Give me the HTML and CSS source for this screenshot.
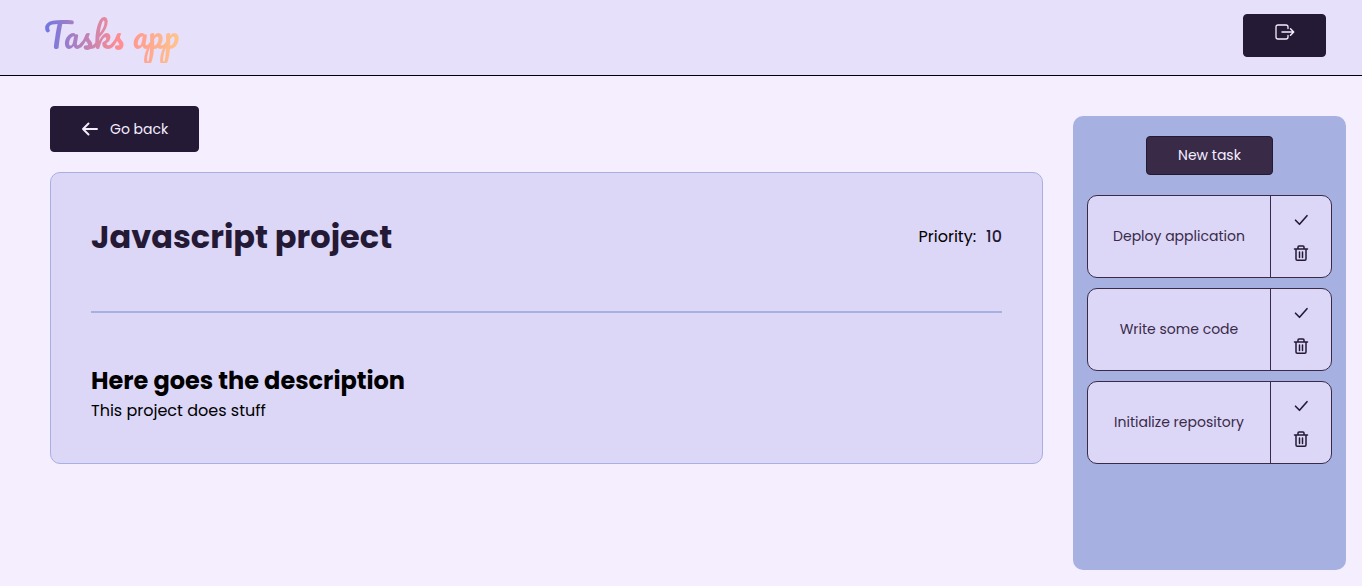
FILE: index.html
```html
<!DOCTYPE html>
<html lang="en">
<head>
<meta charset="utf-8">
<meta name="viewport" content="width=device-width, initial-scale=1">
<title>Tasks app</title>
<link rel="stylesheet" href="styles.css">
</head>
<body>
<svg class="sprite" aria-hidden="true">
  <symbol id="check" viewBox="0 0 16 16"><path d="M2.5 8.200 6.500 12.300 14 3.700" fill="none" stroke="currentColor" stroke-width="1.6" stroke-linecap="round" stroke-linejoin="round"/></symbol>
  <symbol id="trash" viewBox="0 0 16 16"><path d="M1.5 4h13M3 4v10q0 1.2 1.2 1.2h7.6Q13 15.200 13 14V4M5 3.500V2q0-1 1-1h4q1 0 1 1v1.500M6.500 7v5.500M9.500 7v5.500" fill="none" stroke="currentColor" stroke-width="1.5" stroke-linecap="round" stroke-linejoin="round"/></symbol>
</svg>
<header class="header">
  <a class="logo" href="#">Tasks app</a>
  <button class="button logout" type="button" aria-label="Log out">
    <svg class="logout-icon" viewBox="0 0 20 16" fill="none" stroke="currentColor" stroke-linecap="round" stroke-linejoin="round"><path d="M13 4.500V3q0-2-2-2H3Q1 1 1 3v10q0 2 2 2h8q2 0 2-2v-1.500" stroke-width="1.300"/><path d="M7 8h11.500M15.500 4.800 18.700 8l-3.200 3.200" stroke-width="1.500"/></svg>
  </button>
</header>
<main class="layout">
  <div class="content">
    <button class="button back" type="button">
      <svg class="back-icon" viewBox="0 0 16 16" fill="none" stroke="currentColor" stroke-width="1.900" stroke-linecap="round" stroke-linejoin="round"><path d="M15 8H1M6.500 2.500 1 8l5.500 5.500"/></svg>
      Go back
    </button>
    <article class="project">
      <div class="project-head">
        <h1 class="title">Javascript project</h1>
        <p class="priority">Priority: <span class="priority-value">10</span></p>
      </div>
      <h2 class="subtitle">Here goes the description</h2>
      <p class="description">This project does stuff</p>
    </article>
  </div>
  <aside class="tasks">
    <button class="button new-task" type="button">New task</button>
    <ul class="task-list">
      <li class="task">
        <p class="task-name">Deploy application</p>
        <div class="task-actions">
          <button class="icon-button" type="button" aria-label="Complete"><svg class="icon"><use href="#check"/></svg></button>
          <button class="icon-button" type="button" aria-label="Delete"><svg class="icon"><use href="#trash"/></svg></button>
        </div>
      </li>
      <li class="task">
        <p class="task-name">Write some code</p>
        <div class="task-actions">
          <button class="icon-button" type="button" aria-label="Complete"><svg class="icon"><use href="#check"/></svg></button>
          <button class="icon-button" type="button" aria-label="Delete"><svg class="icon"><use href="#trash"/></svg></button>
        </div>
      </li>
      <li class="task">
        <p class="task-name">Initialize repository</p>
        <div class="task-actions">
          <button class="icon-button" type="button" aria-label="Complete"><svg class="icon"><use href="#check"/></svg></button>
          <button class="icon-button" type="button" aria-label="Delete"><svg class="icon"><use href="#trash"/></svg></button>
        </div>
      </li>
    </ul>
  </aside>
</main>
</body>
</html>
```
FILE: styles.css
```css
* { box-sizing: border-box; margin: 0; padding: 0; }
body {
  display: flex;
  flex-direction: column;
  min-height: 100vh;
  background: #f4eeff;
  color: #000;
  font: 16px/24px Poppins, Inter, sans-serif;
}
.sprite { display: none; }
.header {
  display: flex;
  justify-content: space-between;
  align-items: center;
  padding: 8px 36px 12px 44px;
  background: #e6e0fa;
  border-bottom: 1px solid #000;
}
.logo {
  font: 33px/55px Pacifico, cursive;
  text-decoration: none;
  color: transparent;
  background: linear-gradient(to right, #6c76e4, #ff8c92 55%, #ffc48c);
  background-clip: text;
  -webkit-background-clip: text;
}
.button {
  display: flex;
  align-items: center;
  justify-content: center;
  border: 1px solid #251a35;
  border-radius: 4px;
  background: #251a35;
  color: #f4eeff;
  font: inherit;
  font-size: 14px;
  cursor: pointer;
}
.logout { padding: 9px 30px 16px 31px; }
.logout-icon { width: 20px; height: 16px; }
.layout {
  flex: 1;
  display: grid;
  grid-template-columns: 40fr 11fr;
  gap: 30px;
  padding: 30px 16px 16px 50px;
}
.back { gap: 12px; padding: 10px 30px 10px 31px; margin-bottom: 20px; }
.back-icon { width: 16px; height: 16px; }
.project {
  padding: 40px;
  background: #dcd6f7;
  border: 1px solid #a6b1e1;
  border-radius: 10px;
}
.project-head {
  display: flex;
  justify-content: space-between;
  align-items: center;
  padding-bottom: 50px;
  margin-bottom: 50px;
  border-bottom: 2px solid #a6b1e1;
}
.title { font-size: 32px; line-height: 48px; color: #251a35; }
.priority { display: flex; gap: 10px; }
.priority-value { font-weight: 500; color: #251a35; }
.subtitle { font-size: 24px; line-height: 36px; }
.tasks {
  display: flex;
  flex-direction: column;
  align-items: center;
  gap: 20px;
  margin-top: 10px;
  padding: 20px 0;
  background: #a6b1e1;
  border-radius: 10px;
}
.new-task { padding: 6px 31px 7px; background: #392a48; }
.task-list { display: grid; gap: 10px; width: 90%; list-style: none; }
.task {
  display: flex;
  min-height: 83px;
  background: #dcd6f7;
  border: 1px solid #392a48;
  border-radius: 10px;
}
.task-name {
  flex: 1;
  align-self: center;
  padding-bottom: 2px;
  text-align: center;
  font-size: 14px;
  color: #392a48;
}
.task-actions {
  display: flex;
  flex-direction: column;
  align-items: center;
  justify-content: center;
  width: 61px;
  border-left: 1px solid #392a48;
}
.icon-button {
  display: flex;
  padding: 8px 20px 9px;
  background: none;
  border: 0;
  color: #251a35;
  cursor: pointer;
}
.icon { width: 16px; height: 16px; }
```
